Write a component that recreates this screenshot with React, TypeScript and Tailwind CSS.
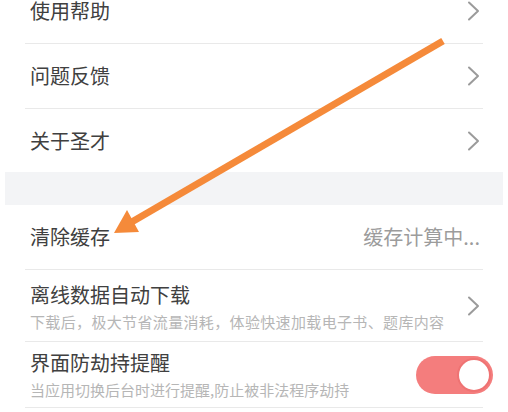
import React from 'react';

const Chevron = () => (
  <svg width="13" height="20" viewBox="0 0 13 20" fill="none">
    <path d="M2 1.5 L11 10 L2 18.5" stroke="#9b9b9b" strokeWidth="2" strokeLinecap="round" strokeLinejoin="round" />
  </svg>
);

const Row = ({ h, border = true, children }: { h: string; border?: boolean; children: React.ReactNode }) => (
  <div className={`mx-[25px] flex items-center pl-[5px] pr-[3px] ${h} ${border ? 'border-b border-[#e9e9e9]' : ''}`}>
    {children}
  </div>
);

const App = () => {
  return (
    <div className="relative w-[508px] h-[412px] overflow-hidden bg-white font-['Noto_Sans_CJK_SC','Noto_Sans',sans-serif]">
      <div className="-mt-[22px]">
        <Row h="h-[66px]">
          <span className="flex-1 text-[20px] text-[#404040]">使用帮助</span>
          <Chevron />
        </Row>
        <Row h="h-[65px]">
          <span className="flex-1 text-[20px] text-[#404040]">问题反馈</span>
          <Chevron />
        </Row>
        <Row h="h-[63px]" border={false}>
          <span className="flex-1 text-[20px] text-[#404040]">关于圣才</span>
          <Chevron />
        </Row>

        <div className="mx-[5px] h-[33px] bg-[#f3f4f6]" />

        <Row h="h-[65px]">
          <span className="flex-1 text-[20px] text-[#404040]">清除缓存</span>
          <span className="text-[20px] text-[#9c9c9c]">缓存计算中...</span>
        </Row>
        <Row h="h-[72px]">
          <div className="flex-1 flex flex-col gap-[4px] pt-[2px]">
            <span className="text-[20px] leading-[26px] text-[#404040]">离线数据自动下载</span>
            <span className="text-[15px] leading-[20px] tracking-[0.35px] text-[#b6b6b6]">下载后，极大节省流量消耗，体验快速加载电子书、题库内容</span>
          </div>
          <Chevron />
        </Row>
        <Row h="h-[66px]">
          <div className="flex-1 flex flex-col gap-[4px]">
            <span className="text-[20px] leading-[26px] text-[#404040]">界面防劫持提醒</span>
            <span className="text-[15px] leading-[20px] text-[#b6b6b6]">当应用切换后台时进行提醒,防止被非法程序劫持</span>
          </div>
          <div className="-mr-[13px] flex h-[38px] w-[77px] items-center justify-end rounded-full bg-[#f47d7d] pr-[2px]">
            <div className="h-[34px] w-[34px] rounded-full border-2 border-[#ef7373] bg-white" />
          </div>
        </Row>
      </div>

      {/* annotation arrow drawn over the screenshot */}
      <svg className="absolute inset-0 pointer-events-none" width="508" height="412" viewBox="0 0 508 412">
        <line x1="443" y1="41" x2="130" y2="223" stroke="#f58a3a" strokeWidth="7" />
        <polygon points="114,233 127,210 139,232" fill="#f58a3a" />
      </svg>
    </div>
  );
};

export default App;
